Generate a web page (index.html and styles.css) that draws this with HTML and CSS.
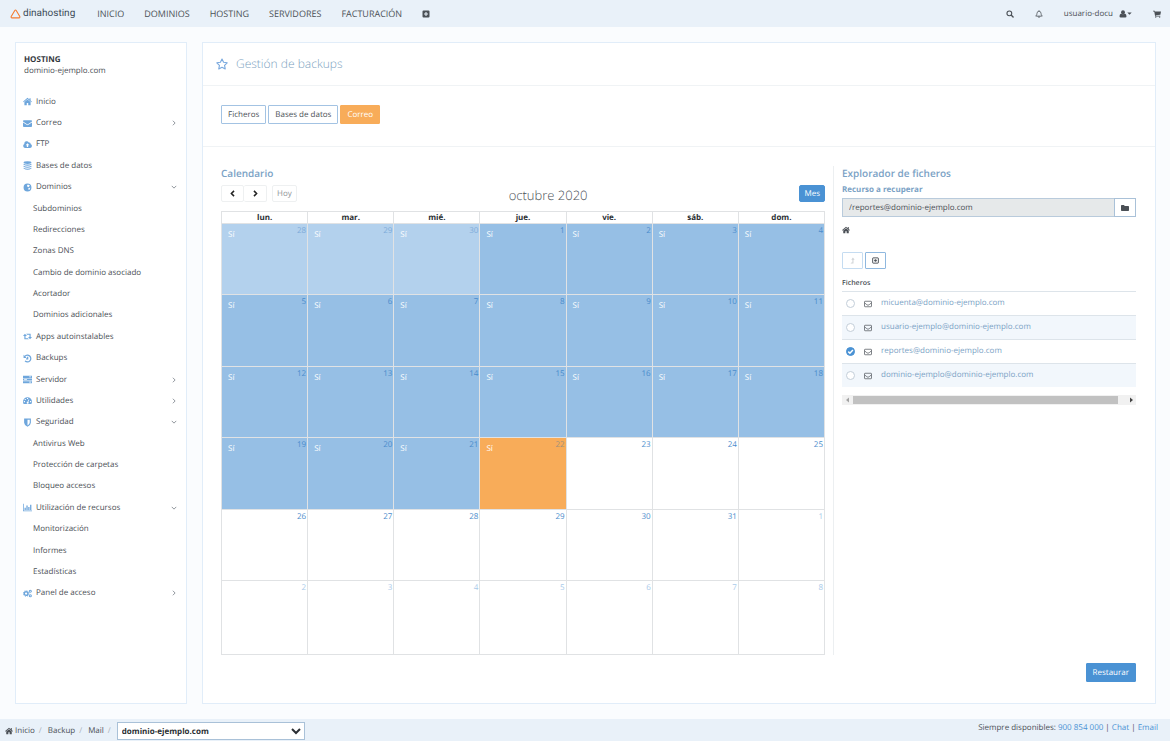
FILE: index.html
```html
<!DOCTYPE html>
<html lang="es">
<head>
<meta charset="utf-8">
<meta name="viewport" content="width=device-width, initial-scale=1">
<title>Gestión de backups</title>
<link rel="stylesheet" href="styles.css">
</head>
<body>
<svg class="sprite" aria-hidden="true">
  <symbol id="home" viewBox="0 0 16 16"><path d="M8 1.500L.3 8.200l1 1.200L8 3.600l6.700 5.800 1-1.200L13.500 6.200V2h-2v2.500z"/><path d="M8 4.400L2.500 9.100V14.500H6.700V10.500h2.600v4h4.200V9.100z"/></symbol>
  <symbol id="mail" viewBox="0 0 16 16"><path d="M0 3.500Q0 2 1.500 2h13Q16 2 16 3.500v.8L8 9.600 0 4.300z"/><path d="M0 6l8 5.300L16 6v6.500q0 1.500-1.500 1.500h-13Q0 14 0 12.500z"/></symbol>
  <symbol id="cloud" viewBox="0 0 16 16"><path fill-rule="evenodd" d="M13.500 7.200A2.500 2.500 0 0 0 10.300 4.500 4.200 4.200 0 0 0 2.400 7 3.700 3.700 0 0 0 3.700 14h8.800a3.500 3.500 0 0 0 1-6.800zM8 5.800l3.300 3.500H9.200V12.300H6.800V9.300H4.700z"/></symbol>
  <symbol id="db" viewBox="0 0 16 16"><ellipse cx="8" cy="2.800" rx="7" ry="2.500"/><path d="M1 4.800q7 3.200 14 0v2q-7 3.400-14 0zM1 8.400q7 3.200 14 0v2q-7 3.400-14 0zM1 12q7 3.200 14 0v1.400q-7 4.600-14 0z"/></symbol>
  <symbol id="globe" viewBox="0 0 16 16"><path fill-rule="evenodd" d="M8 1a7 7 0 1 0 0 14A7 7 0 0 0 8 1zM8.500 2.500L12 4l-1 2-1.500 1.500L8 6.500 7 5zM9.500 9l3.500-.5-1.500 3.500-1.500.5z"/></symbol>
  <symbol id="loop" viewBox="0 0 16 16"><path d="M3.500 3L0 7.300h2.400V13h8L8.700 11H4.500V7.300H7zM12.500 13L16 8.700h-2.400V3h-8l1.700 2h4.200v3.700H9z"/></symbol>
  <symbol id="history" viewBox="0 0 16 16"><path fill="none" stroke="currentColor" stroke-width="2.200" d="M3.300 4.200A6 6 0 1 1 3.600 12.300M8.300 4.800V8.800H5.500"/><path d="M1 1.500V7h5.500z"/></symbol>
  <symbol id="server" viewBox="0 0 16 16"><path fill-rule="evenodd" d="M0 1.500h16v3.700H0zM0 6.200h16v3.700H0zM0 10.900h16v3.700H0zM11 2.700v1.300h3.500V2.700zM2 7.400v1.300h5V7.400zM11 12.100v1.300h3.500v-1.300z"/></symbol>
  <symbol id="gauge" viewBox="0 0 16 16"><path fill-rule="evenodd" d="M8 2a8 8 0 0 0-8 8q0 2.300 1.200 4h13.600Q16 12.300 16 10a8 8 0 0 0-8-8zM7 3.500h2v2H7zM3 5.300h2v2H3zM1.500 9h2v2h-2zM12.500 9h2v2h-2zM9.800 6l1.300.4L9.400 10.500a1.800 1.800 0 1 1-1.400-.3z"/></symbol>
  <symbol id="shield" viewBox="0 0 16 16"><path fill-rule="evenodd" d="M2 1h12v7.500q0 4-6 7-6-3-6-7zM8 3v10.200q4-2.300 4-5V3z"/></symbol>
  <symbol id="chart" viewBox="0 0 16 16"><path d="M0 1.500h1.300v12H16v1.300H0zM2.700 8.500h2.300V12.500H2.700zM6 4.500h2.300v8H6zM9.300 7h2.300v5.500H9.300zM12.600 3h2.300v9.500h-2.300z"/></symbol>
  <symbol id="cogs" viewBox="0 0 16 16"><g fill="none" stroke="currentColor"><circle cx="5.500" cy="8" r="3.300" stroke-width="2.600"/><circle cx="5.500" cy="8" r="5" stroke-width="1.500" stroke-dasharray="2 1.930"/><circle cx="13" cy="4" r="1.900" stroke-width="1.800"/><circle cx="13" cy="12" r="1.900" stroke-width="1.800"/></g></symbol>
  <symbol id="right" viewBox="0 0 16 16"><path fill="none" stroke="currentColor" stroke-width="2.500" d="M5 2l6 6-6 6"/></symbol>
  <symbol id="down" viewBox="0 0 16 16"><path fill="none" stroke="currentColor" stroke-width="2.500" d="M2 5L8 11 14 5"/></symbol>
  <symbol id="prev" viewBox="0 0 16 16"><path fill="none" stroke="currentColor" stroke-width="3.500" d="M11.500 2l-6 6 6 6"/></symbol>
  <symbol id="next" viewBox="0 0 16 16"><path fill="none" stroke="currentColor" stroke-width="3.500" d="M4.500 2l6 6-6 6"/></symbol>
  <symbol id="plus" viewBox="0 0 16 16"><path fill-rule="evenodd" d="M3 1h10A2 2 0 0 1 15 3v10a2 2 0 0 1-2 2H3A2 2 0 0 1 1 13V3A2 2 0 0 1 3 1zM6.900 4v2.900H4v2.200h2.900V12h2.200V9.100H12V6.900H9.100V4z"/></symbol>
  <symbol id="search" viewBox="0 0 16 16"><circle cx="6.700" cy="6.700" r="4.800" fill="none" stroke="currentColor" stroke-width="2.200"/><path stroke="currentColor" stroke-width="2.800" stroke-linecap="round" d="M10.700 10.700l3.500 3.500"/></symbol>
  <symbol id="bell" viewBox="0 0 16 16"><path fill="none" stroke="currentColor" stroke-width="1.500" d="M8 .5v1.700M1.500 12.200Q4 10 4 6.500 4.300 2.500 8 2.500T12 6.500q0 3.500 2.500 5.700zM6 12.500q.2 2.400 2 2.400t2-2.400"/></symbol>
  <symbol id="user" viewBox="0 0 16 16"><circle cx="8" cy="4.500" r="3.900"/><path d="M4.300 7Q1 8 1 12.500 1 15 3.500 15h9q2.500 0 2.500-2.500Q15 8 11.700 7 8 10 4.300 7z"/></symbol>
  <symbol id="caret" viewBox="0 0 16 16"><path d="M1 5h14l-7 7z"/></symbol>
  <symbol id="cart" viewBox="0 0 16 16"><path d="M0 1.500h3.500L4 3h12l-1.200 6.500-9.500 1 .2 1.200H14.500V13H4.300L2.500 3H0z"/><circle cx="5.500" cy="14.200" r="1.300"/><circle cx="13.300" cy="14.200" r="1.300"/></symbol>
  <symbol id="star" viewBox="0 0 16 16"><path fill="none" stroke="currentColor" stroke-width="1.500" stroke-linejoin="round" d="M8 1.300l2.100 4.400 4.800.7-3.500 3.400.9 4.800L8 12.300l-4.300 2.300.9-4.800L1.100 6.400l4.800-.7z"/></symbol>
  <symbol id="folder" viewBox="0 0 16 16"><path d="M0 3.500Q0 2 1.500 2h4Q7 2 7 3.500V4h7.500Q16 4 16 5.500v7q0 1.500-1.500 1.500h-13Q0 14 0 12.500z"/></symbol>
  <symbol id="levelup" viewBox="0 0 16 16"><path d="M3.500 15h6.700V6h2.600L9 1 5.200 6h2.600v6.500H5.500z"/></symbol>
  <symbol id="square" viewBox="0 0 16 16"><rect x="1.500" y="2" width="13" height="12" rx="1" fill="none" stroke="currentColor" stroke-width="2.200"/><path d="M7 5h2v1.500h2v3H9V11H7V9.500H5v-3h2z"/></symbol>
  <symbol id="envelope" viewBox="0 0 16 16"><rect x="1" y="2.500" width="14" height="11" rx="1" fill="none" stroke="currentColor" stroke-width="1.600"/><path fill="none" stroke="currentColor" stroke-width="1.600" d="M1.500 6q5 4.500 6.500 4.500T14.500 6"/></symbol>
</svg>

<header class="topbar">
  <a class="brand" href="#">
    <svg class="brand-mark" viewBox="0 0 20 18" aria-hidden="true"><path d="M8.700 2.700Q10 .8 11.300 2.700L17.800 13.600Q18.600 15.800 16.400 16H3.600Q1.400 15.800 2.200 13.600z"/></svg>
    <span>dinahosting</span>
  </a>
  <nav class="mainnav">
    <a href="#">INICIO</a><a href="#">DOMINIOS</a><a href="#">HOSTING</a><a href="#">SERVIDORES</a><a href="#">FACTURACIÓN</a>
    <a href="#" aria-label="Añadir"><svg class="icon"><use href="#plus"/></svg></a>
  </nav>
  <div class="tools">
    <a href="#" aria-label="Buscar"><svg class="icon"><use href="#search"/></svg></a>
    <a href="#" aria-label="Avisos"><svg class="icon"><use href="#bell"/></svg></a>
    <a class="account" href="#">usuario-docu <span class="account-icons"><svg class="icon"><use href="#user"/></svg><svg class="icon caret"><use href="#caret"/></svg></span></a>
    <a href="#" aria-label="Carrito"><svg class="icon"><use href="#cart"/></svg></a>
  </div>
</header>

<main class="page">
  <aside class="sidebar">
    <p class="side-title">HOSTING</p>
    <p class="side-domain">dominio-ejemplo.com</p>
    <ul class="menu">
      <li><a href="#"><svg class="icon"><use href="#home"/></svg>Inicio</a></li>
      <li><a href="#"><svg class="icon"><use href="#mail"/></svg>Correo<svg class="arrow"><use href="#right"/></svg></a></li>
      <li><a href="#"><svg class="icon"><use href="#cloud"/></svg>FTP</a></li>
      <li><a href="#"><svg class="icon"><use href="#db"/></svg>Bases de datos</a></li>
      <li><a href="#"><svg class="icon"><use href="#globe"/></svg>Dominios<svg class="arrow"><use href="#down"/></svg></a></li>
      <li class="sub"><a href="#">Subdominios</a></li>
      <li class="sub"><a href="#">Redirecciones</a></li>
      <li class="sub"><a href="#">Zonas DNS</a></li>
      <li class="sub"><a href="#">Cambio de dominio asociado</a></li>
      <li class="sub"><a href="#">Acortador</a></li>
      <li class="sub"><a href="#">Dominios adicionales</a></li>
      <li><a href="#"><svg class="icon"><use href="#loop"/></svg>Apps autoinstalables</a></li>
      <li><a href="#"><svg class="icon"><use href="#history"/></svg>Backups</a></li>
      <li><a href="#"><svg class="icon"><use href="#server"/></svg>Servidor<svg class="arrow"><use href="#right"/></svg></a></li>
      <li><a href="#"><svg class="icon"><use href="#gauge"/></svg>Utilidades<svg class="arrow"><use href="#right"/></svg></a></li>
      <li><a href="#"><svg class="icon"><use href="#shield"/></svg>Seguridad<svg class="arrow"><use href="#down"/></svg></a></li>
      <li class="sub"><a href="#">Antivirus Web</a></li>
      <li class="sub"><a href="#">Protección de carpetas</a></li>
      <li class="sub"><a href="#">Bloqueo accesos</a></li>
      <li><a href="#"><svg class="icon"><use href="#chart"/></svg>Utilización de recursos<svg class="arrow"><use href="#down"/></svg></a></li>
      <li class="sub"><a href="#">Monitorización</a></li>
      <li class="sub"><a href="#">Informes</a></li>
      <li class="sub"><a href="#">Estadísticas</a></li>
      <li><a href="#"><svg class="icon"><use href="#cogs"/></svg>Panel de acceso<svg class="arrow"><use href="#right"/></svg></a></li>
    </ul>
  </aside>

  <section class="content">
    <header class="content-head">
      <svg class="star"><use href="#star"/></svg>
      <h1>Gestión de backups</h1>
    </header>
    <div class="types">
      <button class="btn" type="button">Ficheros</button>
      <button class="btn" type="button">Bases de datos</button>
      <button class="btn btn-active" type="button">Correo</button>
    </div>
    <div class="columns">
      <section class="calendar">
        <h2>Calendario</h2>
        <div class="cal-bar">
          <div class="cal-nav">
            <div class="pair">
              <button type="button" aria-label="Mes anterior"><svg><use href="#prev"/></svg></button>
              <button type="button" aria-label="Mes siguiente"><svg><use href="#next"/></svg></button>
            </div>
            <button class="today" type="button">Hoy</button>
          </div>
          <p class="cal-title">octubre 2020</p>
          <button class="month" type="button">Mes</button>
        </div>
        <table class="cal">
          <thead><tr><th>lun.</th><th>mar.</th><th>mié.</th><th>jue.</th><th>vie.</th><th>sáb.</th><th>dom.</th></tr></thead>
          <tbody>
            <tr><td class="on out"><b>28</b><i>Sí</i></td><td class="on out"><b>29</b><i>Sí</i></td><td class="on out"><b>30</b><i>Sí</i></td><td class="on"><b>1</b><i>Sí</i></td><td class="on"><b>2</b><i>Sí</i></td><td class="on"><b>3</b><i>Sí</i></td><td class="on"><b>4</b><i>Sí</i></td></tr>
            <tr><td class="on"><b>5</b><i>Sí</i></td><td class="on"><b>6</b><i>Sí</i></td><td class="on"><b>7</b><i>Sí</i></td><td class="on"><b>8</b><i>Sí</i></td><td class="on"><b>9</b><i>Sí</i></td><td class="on"><b>10</b><i>Sí</i></td><td class="on"><b>11</b><i>Sí</i></td></tr>
            <tr><td class="on"><b>12</b><i>Sí</i></td><td class="on"><b>13</b><i>Sí</i></td><td class="on"><b>14</b><i>Sí</i></td><td class="on"><b>15</b><i>Sí</i></td><td class="on"><b>16</b><i>Sí</i></td><td class="on"><b>17</b><i>Sí</i></td><td class="on"><b>18</b><i>Sí</i></td></tr>
            <tr><td class="on"><b>19</b><i>Sí</i></td><td class="on"><b>20</b><i>Sí</i></td><td class="on"><b>21</b><i>Sí</i></td><td class="on picked"><b>22</b><i>Sí</i></td><td><b>23</b></td><td><b>24</b></td><td><b>25</b></td></tr>
            <tr><td><b>26</b></td><td><b>27</b></td><td><b>28</b></td><td><b>29</b></td><td><b>30</b></td><td><b>31</b></td><td class="out"><b>1</b></td></tr>
            <tr><td class="out"><b>2</b></td><td class="out"><b>3</b></td><td class="out"><b>4</b></td><td class="out"><b>5</b></td><td class="out"><b>6</b></td><td class="out"><b>7</b></td><td class="out"><b>8</b></td></tr>
          </tbody>
        </table>
      </section>

      <section class="explorer">
        <h2>Explorador de ficheros</h2>
        <label class="res-label" for="resource">Recurso a recuperar</label>
        <div class="res">
          <input id="resource" type="text" value="/reportes@dominio-ejemplo.com" readonly>
          <button type="button" aria-label="Examinar"><svg class="icon"><use href="#folder"/></svg></button>
        </div>
        <a class="root" href="#" aria-label="Raíz"><svg class="icon"><use href="#home"/></svg></a>
        <div class="actions">
          <button type="button" aria-label="Subir un nivel" disabled><svg class="icon"><use href="#levelup"/></svg></button>
          <button type="button" aria-label="Seleccionar"><svg class="icon"><use href="#square"/></svg></button>
        </div>
        <table class="files">
          <thead><tr><th>Ficheros</th></tr></thead>
          <tbody>
            <tr><td><div class="file"><input type="radio" name="file" aria-label="micuenta@dominio-ejemplo.com"><svg class="icon"><use href="#envelope"/></svg><a href="#">micuenta@dominio-ejemplo.com</a></div></td></tr>
            <tr><td><div class="file"><input type="radio" name="file" aria-label="usuario-ejemplo@dominio-ejemplo.com"><svg class="icon"><use href="#envelope"/></svg><a href="#">usuario-ejemplo@dominio-ejemplo.com</a></div></td></tr>
            <tr><td><div class="file"><span class="check"><input type="radio" name="file" aria-label="reportes@dominio-ejemplo.com" checked><svg viewBox="0 0 9 9"><path d="M2.300 4.600l1.600 1.600 3-3.200"/></svg></span><svg class="icon"><use href="#envelope"/></svg><a href="#">reportes@dominio-ejemplo.com</a></div></td></tr>
            <tr><td><div class="file"><input type="radio" name="file" aria-label="dominio-ejemplo@dominio-ejemplo.com"><svg class="icon"><use href="#envelope"/></svg><a href="#">dominio-ejemplo@dominio-ejemplo.com</a></div></td></tr>
          </tbody>
        </table>
        <div class="scroll">
          <svg class="scroll-left" viewBox="0 0 10 10"><path d="M7 2.500v5L4 5z"/></svg>
          <div class="scroll-track"><div class="thumb"></div></div>
          <svg class="scroll-right" viewBox="0 0 10 10"><path d="M4 2.500v5L7 5z"/></svg>
        </div>
      </section>
    </div>
    <div class="submit"><button class="btn btn-primary" type="button">Restaurar</button></div>
  </section>
</main>

<footer class="bottombar">
  <nav class="crumbs">
    <a href="#"><svg class="icon"><use href="#home"/></svg>Inicio</a><span>/</span><a href="#">Backup</a><span>/</span><a href="#">Mail</a><span>/</span>
    <select aria-label="Dominio"><option>dominio-ejemplo.com</option></select>
  </nav>
  <p class="support">Siempre disponibles: <a href="#">900 854 000</a> | <a href="#">Chat</a> | <a href="#">Email</a></p>
</footer>
</body>
</html>
```
FILE: styles.css
```css
* { box-sizing: border-box; }

body {
  margin: 0;
  min-height: 100vh;
  display: flex;
  flex-direction: column;
  background: #fafcfe;
  color: #4b5056;
  font: 8px/12px "Open Sans", "Noto Sans", sans-serif;
  text-rendering: geometricPrecision;
}

h1, h2, p, ul { margin: 0; padding: 0; }
a { color: inherit; text-decoration: none; }
button, input, select { margin: 0; font: inherit; color: inherit; text-rendering: inherit; }
button { padding: 0; cursor: pointer; }
svg { display: block; fill: currentColor; }
.sprite { position: absolute; width: 0; height: 0; }
.icon { flex: none; width: 8px; height: 8px; }

/* Top bar */
.topbar {
  display: flex;
  align-items: center;
  height: 27px;
  padding: 0 9px 0 10px;
  background: #e9f1f9;
}
.brand {
  display: flex;
  align-items: center;
  gap: 2px;
  color: #3c4c58;
  font: 10px/14px Roboto, sans-serif;
}
.brand span { padding-top: 1px; }
.brand-mark { width: 11px; height: 10px; fill: none; stroke: #f47b30; stroke-width: 2; }
.mainnav { display: flex; align-items: center; gap: 20px; margin-left: 22px; font-size: 9px; }
.tools { display: flex; align-items: center; gap: 21px; margin-left: auto; }
.account { display: flex; align-items: center; gap: 6px; }
.account-icons { display: flex; align-items: center; }
.caret { width: 5px; height: 5px; }

/* Page */
.page {
  flex: 1;
  display: grid;
  grid-template-columns: 172px minmax(0, 1fr);
  gap: 15px;
  padding: 15px 14px 15px 15px;
}
.sidebar, .content { background: #fff; border: 1px solid #e1edf9; }

.sidebar { padding: 11px 8px; }
.side-title { font-weight: 700; line-height: 11px; color: #33383d; }
.side-domain { line-height: 11px; }
.menu {
  display: grid;
  grid-auto-rows: 1fr;
  min-height: 513px;
  margin-top: 15px;
  list-style: none;
}
.menu a { display: flex; align-items: center; height: 100%; }
.menu .icon { width: 9px; height: 9px; margin: 0 4px 0 -1px; color: #6ea6dc; }
.menu .sub { padding-left: 9px; }
.arrow { width: 6px; height: 6px; margin: 0 1px 0 auto; color: #8a9096; }

/* Content */
.content { display: flex; flex-direction: column; }
.content-head {
  display: flex;
  align-items: center;
  gap: 8px;
  height: 43px;
  padding-left: 13px;
  border-bottom: 1px solid #f0f3f5;
}
.star { width: 12px; height: 12px; color: #7aa9de; }
h1 { font-size: 12px; line-height: 16px; font-weight: 300; color: #7c9fc0; }
h2 { font-size: 10px; line-height: 14px; font-weight: 600; color: #7ba2c5; }

.types {
  display: flex;
  gap: 2px;
  padding: 19px 18px 22px;
  border-bottom: 1px solid #f0f3f5;
}
.btn {
  height: 19px;
  padding: 0 6px;
  border: 1px solid #a3c3e3;
  border-radius: 1px;
  background: #fff;
}
.btn-active { border-color: #f8ac59; background: #f8ac59; color: #fff; }
.btn-primary { border-color: #4a92d4; background: #4a92d4; color: #fff; }

.columns {
  display: grid;
  grid-template-columns: minmax(0, 604fr) minmax(0, 303fr);
  gap: 8px;
  padding: 19px 19px 0 18px;
}

.cal-bar {
  display: flex;
  align-items: center;
  justify-content: space-between;
  height: 17px;
  margin: 5px 0 9px;
}
.cal-nav, .pair { display: flex; }
.cal-nav { gap: 5px; }
.cal-bar button { height: 17px; border: 1px solid #eef0f1; border-radius: 2px; background: #fff; }
.pair button { display: grid; place-items: center; width: 23px; color: #222; }
.pair button + button { border-left: 0; }
.pair svg { width: 7px; height: 7px; }
.cal-bar .today { padding: 0 4px; color: #8f9499; }
.cal-title { padding-top: 3px; font-size: 13px; line-height: 17px; font-weight: 300; color: #4b5056; }
.cal-bar .month { padding: 0 4px; border-color: #4a92d4; background: #4a92d4; color: #fff; }

.cal { width: 100%; table-layout: fixed; border-collapse: collapse; }
.cal th, .cal td { padding: 0; border: 1px solid #e0e2e4; }
.cal th { height: 12px; line-height: 11px; font-weight: 700; color: #2b2f33; }
.cal td { height: 71px; padding-top: 1px; vertical-align: top; }
.cal tr:nth-child(even) td { height: 72px; }
.cal tr:last-child td { height: 74px; }
.cal b { display: block; height: 4px; padding-right: 1px; text-align: right; font-weight: 400; color: #4a8ccc; }
.cal i { display: block; padding-left: 6px; font-style: normal; color: #fff; }
.cal .out b { color: #a9caea; }
.cal .on { background: #96bfe5; }
.cal .on.out { background: #b3d1ed; }
.cal .on.out b { color: #7dabd9; }
.cal .on.picked { background: #f8ac59; }
.cal .picked b { color: #a1907c; }

.explorer { padding-left: 8px; border-left: 1px solid #eceff1; }
.res-label { display: block; margin: 4px 0 2px; font-weight: 700; color: #7ba2c5; }
.res { display: flex; }
.res input {
  flex: 1;
  min-width: 0;
  height: 19px;
  padding: 0 6px;
  border: 1px solid #b9cbdc;
  border-radius: 0;
  background: #e6e9ea;
}
.res button { display: grid; place-items: center; width: 22px; height: 19px; margin-left: -1px; border: 1px solid #a9c1d8; background: #fff; }
.root { display: block; margin: 9px 0 18px; }
.actions { display: flex; gap: 2px; }
.actions button { display: grid; place-items: center; width: 21px; height: 17px; border: 1px solid #8fb8df; border-radius: 1px; background: #fff; }
.actions button:disabled { border-color: #c5dcf1; color: #d0d3d6; }
.actions .icon { width: 7px; height: 7px; }

.files { width: 100%; margin-top: 8px; border-collapse: collapse; }
.files th { height: 14px; padding: 0; font-size: 7px; font-weight: 600; line-height: 11px; text-align: left; }
.files td { height: 24px; padding: 0 0 0 4px; border-top: 1px solid #dde4ea; }
.files tr:nth-child(even) td { background: #f2f7fc; }
.file { display: flex; align-items: center; }
.file a { color: #7ba2c5; }
.file .icon { margin: 2px 9px 0 9px; color: #5f656b; }
.file input {
  appearance: none;
  flex: none;
  width: 9px;
  height: 9px;
  border: 1px solid #c3ced9;
  border-radius: 50%;
  background: #fff;
}
.file input:checked { border-color: #4a92d4; background: #4a92d4; }
.check { display: grid; }
.check > * { grid-area: 1 / 1; }
.check svg { z-index: 1; width: 9px; height: 9px; fill: none; stroke: #fff; stroke-width: 1.500; pointer-events: none; }

.scroll { display: flex; align-items: center; height: 10px; margin-top: 8px; background: #f1f1f1; }
.scroll > svg { width: 10px; height: 10px; }
.scroll-left { color: #a3a3a3; }
.scroll-right { color: #444; }
.scroll-track { flex: 1; padding: 0 8px 0 1px; }
.thumb { height: 8px; background: #c1c1c1; }

.submit { display: flex; justify-content: flex-end; padding: 8px 19px 21px; }

/* Bottom bar */
.bottombar {
  display: flex;
  align-items: flex-start;
  justify-content: space-between;
  height: 22px;
  padding: 3px 12px 0 5px;
  background: #e9f1f9;
}
.crumbs, .crumbs a { display: flex; align-items: center; }
.crumbs { gap: 4px; }
.crumbs a { gap: 2px; }
.crumbs span { padding-right: 2px; color: #a9b0b7; }
.crumbs select {
  width: 188px;
  height: 18px;
  padding: 0;
  border: 1px solid #a9c1d8;
  border-radius: 0;
  background: #fff;
  font-weight: 700;
  color: #2b2f33;
}
.support a { color: #4a92d4; }
```
